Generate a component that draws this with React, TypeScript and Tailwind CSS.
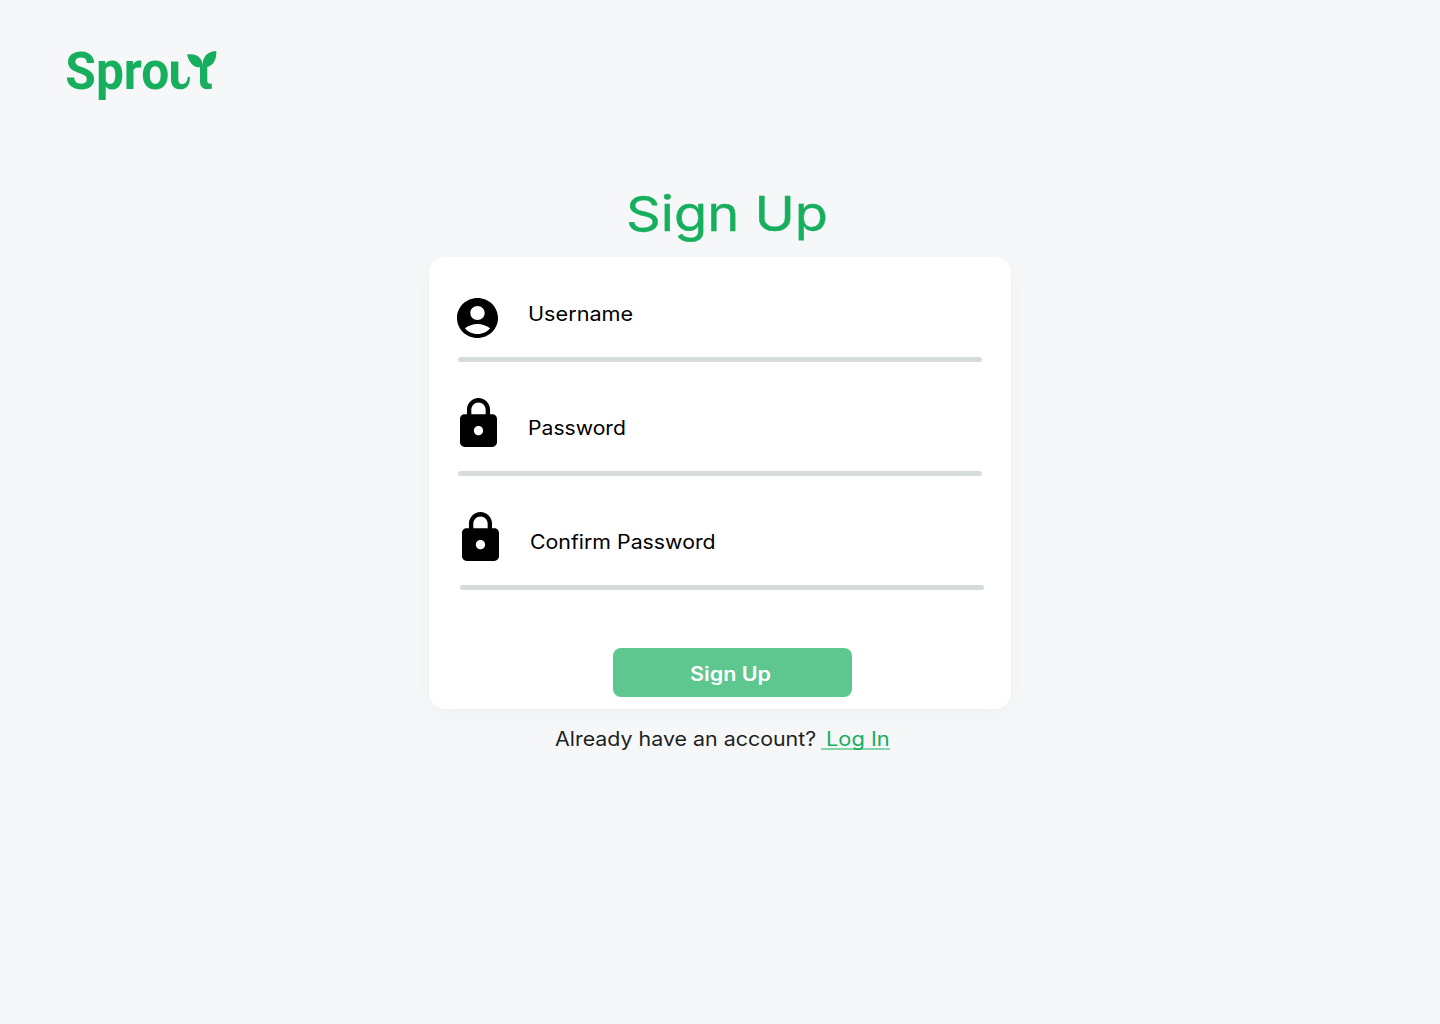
import type { ReactNode } from "react";

function Logo() {
  return (
    <svg className="overflow-visible" width="160" height="70" viewBox="60 34 160 70" fill="#17af5d" role="img" aria-label="Sprout">
      <text x="65.300" y="88.500" fontFamily="Roboto" fontWeight="700" fontSize="51" textLength="104" lengthAdjust="spacingAndGlyphs">
        Spro
      </text>
      <path d="M171 61.500H178.300V79C178.300 82.500 179.500 84 182 84C185.500 84 187.500 81.500 187.700 77L189.800 76.700C190.500 84.500 186.500 89.300 180.500 89.300C174.500 89.300 171 86 171 79.500Z" />
      <path d="M187 54.700C196 52.800 202.300 57.500 202.800 65.500C202.300 57 207.500 51.300 216.300 51.100C216.700 59.500 213.500 65.500 207.300 67V80.500C207.300 83 208.400 84 211.800 83.600V88.700C204.500 90.200 200 88.200 200 81.500V67.300C193.500 67.600 189.300 63 187 54.700Z" />
    </svg>
  );
}

function UserIcon() {
  return (
    <svg className="h-10 w-[41px]" viewBox="2 2 20 20" preserveAspectRatio="none" fill="#000">
      <path d="M12 2C6.480 2 2 6.480 2 12s4.480 10 10 10 10-4.480 10-10S17.520 2 12 2m0 4c1.930 0 3.500 1.570 3.500 3.500S13.930 13 12 13s-3.500-1.570-3.500-3.500S10.070 6 12 6m0 14c-2.030 0-4.430-.820-6.140-2.880C7.550 15.800 9.680 15 12 15s4.450.800 6.140 2.120C16.430 19.180 14.030 20 12 20" />
    </svg>
  );
}

function LockIcon() {
  return (
    <svg className="h-[49px] w-[37px]" viewBox="4 1 16 21" preserveAspectRatio="none" fill="#000">
      <path d="M18 8h-1V6c0-2.760-2.240-5-5-5S7 3.240 7 6v2H6c-1.100 0-2 .900-2 2v10c0 1.100.900 2 2 2h12c1.100 0 2-.900 2-2V10c0-1.100-.900-2-2-2zm-6 9c-1.100 0-2-.900-2-2s.900-2 2-2 2 .900 2 2-.900 2-2 2zM8.900 6c0-1.710 1.390-3.100 3.100-3.100 1.710 0 3.100 1.390 3.100 3.100v2H8.900V6z" />
    </svg>
  );
}

function Field({ icon, className, children }: { icon: ReactNode; className: string; children: ReactNode }) {
  return (
    <div className={className}>
      <div className="flex h-[60px]">
        <div className="flex w-[70px] shrink-0 items-start">{icon}</div>
        {children}
      </div>
      <div className="h-[5px] w-[524px] rounded-full bg-[#d6dcdc]" />
    </div>
  );
}

export default function App() {
  return (
    <main className="h-[1024px] w-[1440px] overflow-hidden bg-[#f6f7f9] font-['Inter',sans-serif] text-black">
      <header className="h-[183px] pl-[60px] pt-[34px]">
        <Logo />
      </header>
      <div className="ml-[429px] w-[582px]">
        <h1 className="h-[74px] pt-px pl-[197px] text-[48.500px] leading-[60px] whitespace-nowrap text-[#17af5d] [-webkit-text-stroke:0.4px_#17af5d]">
          <span className="inline-block origin-left scale-x-[1.118]">Sign Up</span>
        </h1>
        <section className="flex h-[452px] flex-col rounded-[16px] bg-white pl-[29px] shadow-[0_4px_20px_rgba(0,0,0,0.03)]">
          <Field className="mt-10" icon={<div className="-ml-px mt-px"><UserIcon /></div>}>
            <label className="mt-[5px] h-6 origin-left scale-x-[1.11] text-[19.500px] leading-6 whitespace-nowrap">Username</label>
          </Field>
          <Field className="mt-[49px]" icon={<div className="-mt-[13px] ml-0.5"><LockIcon /></div>}>
            <label className="mt-[5px] h-6 origin-left scale-x-[1.085] text-[19.500px] leading-6 whitespace-nowrap">Password</label>
          </Field>
          <Field className="mt-[49px] ml-0.5" icon={<div className="-mt-[13px] ml-0.5"><LockIcon /></div>}>
            <label className="mt-[5px] h-6 origin-left scale-x-[1.093] text-[19.500px] leading-6 whitespace-nowrap">Confirm Password</label>
          </Field>
          <button className="mt-[58px] ml-[155px] flex h-[49px] w-[238.500px] items-center rounded-[8px] bg-[#5dc78f] pl-[77px] text-[19.500px] leading-6 font-semibold text-white">
            <span className="mt-0.5 origin-left scale-x-[1.105] whitespace-nowrap">Sign Up</span>
          </button>
        </section>
        <p className="mt-[18px] ml-[126px] flex h-6 text-[19.500px] leading-6 whitespace-nowrap text-[#1d1f22]">
          <span className="w-[266px]"><span className="inline-block origin-left scale-x-[1.097]">Already have an account?</span></span>
          <a href="#" className="h-[23px] w-[69px] border-b-2 border-[#86d5aa] pl-[5px] text-[#17af5d]">
            <span className="inline-block origin-left scale-x-[1.120]">Log In</span>
          </a>
        </p>
      </div>
    </main>
  );
}
